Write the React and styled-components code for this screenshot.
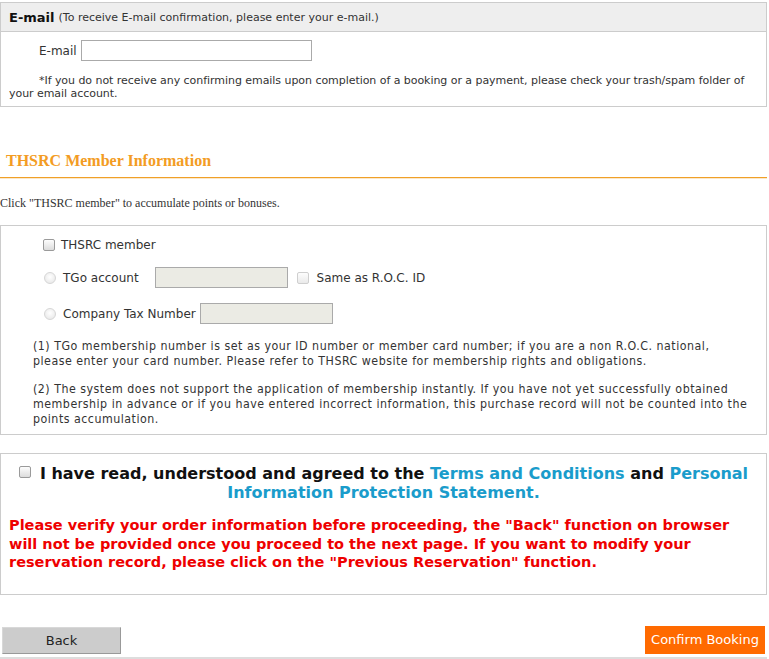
import React from 'react'
import styled, { createGlobalStyle } from 'styled-components'

const GlobalStyle = createGlobalStyle`
  body {
    margin: 0;
    background: #fff;
    font-family: Verdana, "DejaVu Sans", sans-serif;
    color: #333;
  }
`

const Page = styled.div`
  width: 767px;
  padding-top: 2px;
`

const Box = styled.div`
  border: 1px solid #cccccc;
  background: #fff;
`

const BoxHeader = styled.div`
  background: #eeeeee;
  border-bottom: 1px solid #cccccc;
  height: 28px;
  display: flex;
  align-items: center;
  padding-left: 8px;
  font-size: 11px;
  color: #333;
`

const HeaderStrong = styled.b`
  font-size: 13px;
  color: #111;
  margin-right: 4px;
`

const EmailBody = styled.div`
  padding: 8px 8px 6px 8px;
`

const FieldRow = styled.div`
  display: flex;
  align-items: center;
  padding-left: ${p => p.indent || 0}px;
  font-size: 12px;
  color: #333;
  margin-bottom: ${p => p.mb || 0}px;
`

const TextInput = styled.input`
  box-sizing: border-box;
  width: ${p => p.w}px;
  height: ${p => p.h || 21}px;
  border: 1px solid #aaaaaa;
  background: ${p => (p.disabled ? '#ebebe4' : '#fff')};
  margin: 0 0 0 ${p => p.ml || 0}px;
  padding: 0 3px;
`

const Note = styled.p`
  margin: 0;
  font-size: 11px;
  line-height: 13px;
  color: #333;
  text-indent: ${p => p.indent || 0}px;
  letter-spacing: -0.05px;
`

const SectionTitle = styled.h3`
  margin: 44px 0 0;
  padding: 0 0 6px 6px;
  font-family: "Liberation Serif", "Times New Roman", serif;
  font-size: 16px;
  line-height: 20px;
  font-weight: bold;
  color: #f39c23;
`

const OrangeRule = styled.div`
  height: 1px;
  background: #f0a028;
  box-shadow: 0 1px 0 rgba(240, 160, 40, 0.25);
`

const Intro = styled.div`
  font-family: "Liberation Serif", "Times New Roman", serif;
  font-size: 12px;
  color: #333;
  margin: 18px 0 14px;
`

const MemberBody = styled.div`
  padding: 12px 18px 7px 30px;
  display: flex;
  flex-direction: column;
`

const Check = styled.span`
  box-sizing: border-box;
  display: inline-block;
  width: 12px;
  height: 12px;
  border: 1px solid ${p => (p.faded ? '#cfcfcf' : '#9a9a9a')};
  border-radius: 2px;
  background: linear-gradient(#fdfdfd, ${p => (p.faded ? '#eaeaea' : '#dcdcdc')});
  flex: none;
  margin-left: ${p => p.ml || 0}px;
`

const InlineCheck = styled(Check)`
  margin-right: 9px;
  vertical-align: 1px;
`

const Radio = styled.span`
  box-sizing: border-box;
  display: inline-block;
  width: 12px;
  height: 12px;
  border: 1px solid #d6d6d6;
  border-radius: 50%;
  background: radial-gradient(circle at 50% 40%, #ffffff, #e4e4e4);
  flex: none;
`

const Label = styled.span`
  margin-left: ${p => p.ml || 0}px;
  margin-right: ${p => p.mr || 0}px;
  color: #333;
`

const MemberNote = styled.p`
  margin: ${p => p.mt || 0}px 0 0 2px;
  font-size: 12.3px;
  line-height: 15px;
  letter-spacing: 0.5px;
  color: #333;
  font-family: "DejaVu Sans Condensed", "DejaVu Sans", sans-serif;
`

const AgreeBox = styled(Box)`
  margin-top: 18px;
  padding: 10px 8px 22px 8px;
`

const AgreeLine = styled.div`
  text-align: center;
  font-size: 16px;
  font-weight: bold;
  line-height: 19px;
  color: #111;
  padding: 0 4px;
`

const Link = styled.a`
  color: #1a9ccb;
  text-decoration: none;
`

const Warning = styled.p`
  margin: 14px 0 0;
  font-size: 14.5px;
  font-weight: bold;
  line-height: 18.5px;
  color: #ee0000;
`

const ButtonBar = styled.div`
  display: flex;
  justify-content: space-between;
  align-items: flex-end;
  margin-top: 31px;
  padding: 0 2px 3px 2px;
  border-bottom: 2px solid #dddddd;
`

const Button = styled.button`
  font-family: Verdana, "DejaVu Sans", sans-serif;
  font-size: 13px;
  height: ${p => p.h}px;
  width: ${p => p.w}px;
  margin: 0;
  cursor: pointer;
  ${p =>
    p.primary
      ? `
    background: #ff6a00;
    color: #fff;
    border: none;
  `
      : `
    background: #cccccc;
    color: #222;
    border: 1px solid #d8d8d8;
    border-right-color: #999;
    border-bottom-color: #999;
  `}
`

export default function App() {
  return (
    <>
      <GlobalStyle />
      <Page>
        <Box>
          <BoxHeader>
            <HeaderStrong>E-mail</HeaderStrong>
            (To receive E-mail confirmation, please enter your e-mail.)
          </BoxHeader>
          <EmailBody>
            <FieldRow indent={30} mb={13}>
              <Label>E-mail</Label>
              <TextInput w={231} ml={4} />
            </FieldRow>
            <Note indent={30}>
              *If you do not receive any confirming emails upon completion of a booking or a payment, please check your trash/spam folder of your email account.
            </Note>
          </EmailBody>
        </Box>

        <SectionTitle>THSRC Member Information</SectionTitle>
        <OrangeRule />
        <Intro>Click "THSRC member" to accumulate points or bonuses.</Intro>

        <Box>
          <MemberBody>
            <FieldRow indent={12} mb={15}>
              <Check />
              <Label ml={6}>THSRC member</Label>
            </FieldRow>
            <FieldRow indent={13} mb={15}>
              <Radio />
              <Label ml={7} mr={16}>TGo account</Label>
              <TextInput w={133} disabled />
              <Check faded ml={9} />
              <Label ml={8}>Same as R.O.C. ID</Label>
            </FieldRow>
            <FieldRow indent={13} mb={11}>
              <Radio />
              <Label ml={7}>Company Tax Number</Label>
              <TextInput w={133} ml={4} disabled />
            </FieldRow>
            <MemberNote mt={4}>
              (1) TGo membership number is set as your ID number or member card number; if you are a non R.O.C. national, please enter your card number. Please refer to THSRC website for membership rights and obligations.
            </MemberNote>
            <MemberNote mt={13}>
              (2) The system does not support the application of membership instantly. If you have not yet successfully obtained membership in advance or if you have entered incorrect information, this purchase record will not be counted into the points accumulation.
            </MemberNote>
          </MemberBody>
        </Box>

        <AgreeBox>
          <AgreeLine>
            <InlineCheck />
            I have read, understood and agreed to the <Link href="#">Terms and Conditions</Link> and{' '}
            <Link href="#">Personal</Link>{' '}
            <Link href="#">Information Protection Statement.</Link>
          </AgreeLine>
          <Warning>
            Please verify your order information before proceeding, the "Back" function on browser will not be provided once you proceed to the next page. If you want to modify your reservation record, please click on the "Previous Reservation" function.
          </Warning>
        </AgreeBox>

        <ButtonBar>
          <Button w={119} h={27}>Back</Button>
          <Button primary w={120} h={28}>Confirm Booking</Button>
        </ButtonBar>
      </Page>
    </>
  )
}
